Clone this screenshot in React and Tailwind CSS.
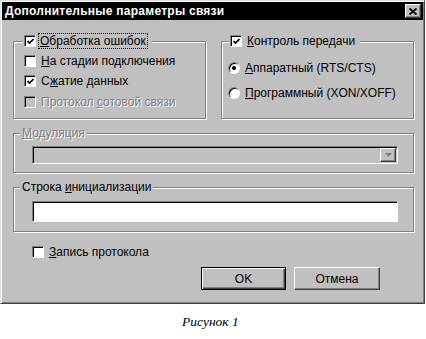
import React from 'react';

const raised = "border border-t-white border-l-white border-r-[#404040] border-b-[#404040] shadow-[inset_-1px_-1px_0_#808080]";
const sunken = "border border-t-[#808080] border-l-[#808080] border-r-white border-b-white shadow-[inset_1px_1px_0_#000]";
const groupBox = "border border-[#808080] shadow-[inset_1px_1px_0_#fff,1px_1px_0_#fff] min-w-0";
const disabledText = "text-[#808080] [text-shadow:1px_1px_0_#fff]";

const CheckBox = ({ checked, disabled }) => (
  <span className={`inline-flex w-[12px] h-[12px] shrink-0 items-center justify-center ${sunken} ${disabled ? 'bg-[#c0c0c0]' : 'bg-white'}`}>
    {checked && (
      <svg width="7" height="7" viewBox="0 0 7 7">
        <path d="M0.5 3 L2.5 5 L6.5 1" stroke="#000" strokeWidth="1.7" fill="none" />
      </svg>
    )}
  </span>
);

const Radio = ({ checked }) => (
  <span className="inline-flex w-[12px] h-[12px] shrink-0 items-center justify-center rounded-full bg-white border border-t-[#808080] border-l-[#808080] border-r-white border-b-white shadow-[inset_1px_1px_0_#000]">
    {checked && <span className="w-[4px] h-[4px] rounded-full bg-black" />}
  </span>
);

export default function App() {
  return (
    <div className="w-[426px] h-[339px] bg-white font-['Liberation_Sans',Arial,sans-serif] text-[12px] leading-[16px] text-black">
      <div className="w-[425px] h-[304px] bg-[#c0c0c0] border border-t-[#dfdfdf] border-l-[#dfdfdf] border-r-[#404040] border-b-[#404040] p-[1px] shadow-[inset_1px_1px_0_#fff,inset_-1px_-1px_0_#808080] flex flex-col">
        {/* title bar */}
        <div className="h-[18px] bg-black flex items-center justify-between pl-[3px] pr-[2px]">
          <span className="text-white font-bold tracking-[0.25px]">Дополнительные параметры связи</span>
          <span className={`w-[16px] h-[14px] bg-[#c0c0c0] flex items-center justify-center ${raised}`}>
            <svg width="8" height="7" viewBox="0 0 8 7">
              <path d="M0.5 0.5 L7.5 6.5 M7.5 0.5 L0.5 6.5" stroke="#000" strokeWidth="1.8" />
            </svg>
          </span>
        </div>

        <div className="flex flex-col pl-[11px]">
          <div className="mt-[13px] flex gap-[15px]">
            {/* errors group */}
            <fieldset className={`w-[193px] ${groupBox}`}>
              <legend className="ml-[9px] pl-[1px] pr-[4px] h-[16px] bg-[#c0c0c0] flex items-center">
                <CheckBox checked />
                <span className="ml-[2px] px-[1px] leading-[14px] border border-dotted border-black">
                  <u>О</u>бработка ошибок
                </span>
              </legend>
              <div className="pt-[2px] pb-[6px] pl-[10px] flex flex-col">
                <div className="h-[20px] flex items-center gap-[5px]">
                  <CheckBox />
                  <span><u>Н</u>а стадии подключения</span>
                </div>
                <div className="h-[20px] flex items-center gap-[5px]">
                  <CheckBox checked />
                  <span>С<u>ж</u>атие данных</span>
                </div>
                <div className="h-[21px] flex items-center gap-[5px]">
                  <CheckBox disabled />
                  <span className={disabledText}>Протокол <u>с</u>отовой связи</span>
                </div>
              </div>
            </fieldset>

            {/* flow control group */}
            <fieldset className={`w-[193px] ${groupBox}`}>
              <legend className="ml-[7px] pl-[1px] pr-[5px] h-[16px] bg-[#c0c0c0] flex items-center gap-[5px]">
                <CheckBox checked />
                <span><u>К</u>онтроль передачи</span>
              </legend>
              <div className="pt-[9px] pb-[13px] pl-[6px] flex flex-col gap-[5px]">
                <div className="h-[20px] flex items-center gap-[5px]">
                  <Radio checked />
                  <span><u>А</u>ппаратный (RTS/CTS)</span>
                </div>
                <div className="h-[20px] flex items-center gap-[5px]">
                  <Radio />
                  <span><u>П</u>рограммный (XON/XOFF)</span>
                </div>
              </div>
            </fieldset>
          </div>

          {/* modulation */}
          <fieldset className={`mt-[6px] w-[401px] ${groupBox}`}>
            <legend className={`ml-[6px] px-[2px] bg-[#c0c0c0] ${disabledText}`}>
              <u>М</u>одуляция
            </legend>
            <div className="pt-[5px] pb-[8px] pl-[18px]">
              <div className={`w-[366px] h-[18px] bg-[#c0c0c0] flex justify-end items-center pr-[1px] ${sunken}`}>
                <span className={`w-[16px] h-[14px] bg-[#c0c0c0] flex items-center justify-center ${raised}`}>
                  <svg width="7" height="4" viewBox="0 0 7 4">
                    <path d="M0 0 H7 L3.5 4 Z" fill="#808080" />
                  </svg>
                </span>
              </div>
            </div>
          </fieldset>

          {/* init string */}
          <fieldset className={`mt-[6px] w-[401px] ${groupBox}`}>
            <legend className="ml-[6px] px-[2px] bg-[#c0c0c0]">
              Строка <u>и</u>нициализации
            </legend>
            <div className="pt-[6px] pb-[9px] pl-[18px]">
              <div className={`w-[366px] h-[21px] bg-white ${sunken}`} />
            </div>
          </fieldset>

          <div className="mt-[10px] h-[20px] ml-[19px] flex items-center gap-[5px]">
            <CheckBox />
            <span><u>З</u>апись протокола</span>
          </div>

          <div className="mt-[5px] flex justify-end gap-[8px] pr-[43px]">
            <button className="w-[85px] h-[23px] bg-[#c0c0c0] border border-black shadow-[inset_1px_1px_0_#fff,inset_-1px_-1px_0_#404040,inset_-2px_-2px_0_#808080] flex items-center justify-center">
              OK
            </button>
            <button className={`w-[86px] h-[23px] bg-[#c0c0c0] flex items-center justify-center ${raised}`}>
              Отмена
            </button>
          </div>
        </div>
      </div>

      <div className="mt-[10px] pl-[182px] font-['Liberation_Serif','Times_New_Roman',serif] italic text-[13.5px] leading-[16px]">
        Рисунок 1
      </div>
    </div>
  );
}
